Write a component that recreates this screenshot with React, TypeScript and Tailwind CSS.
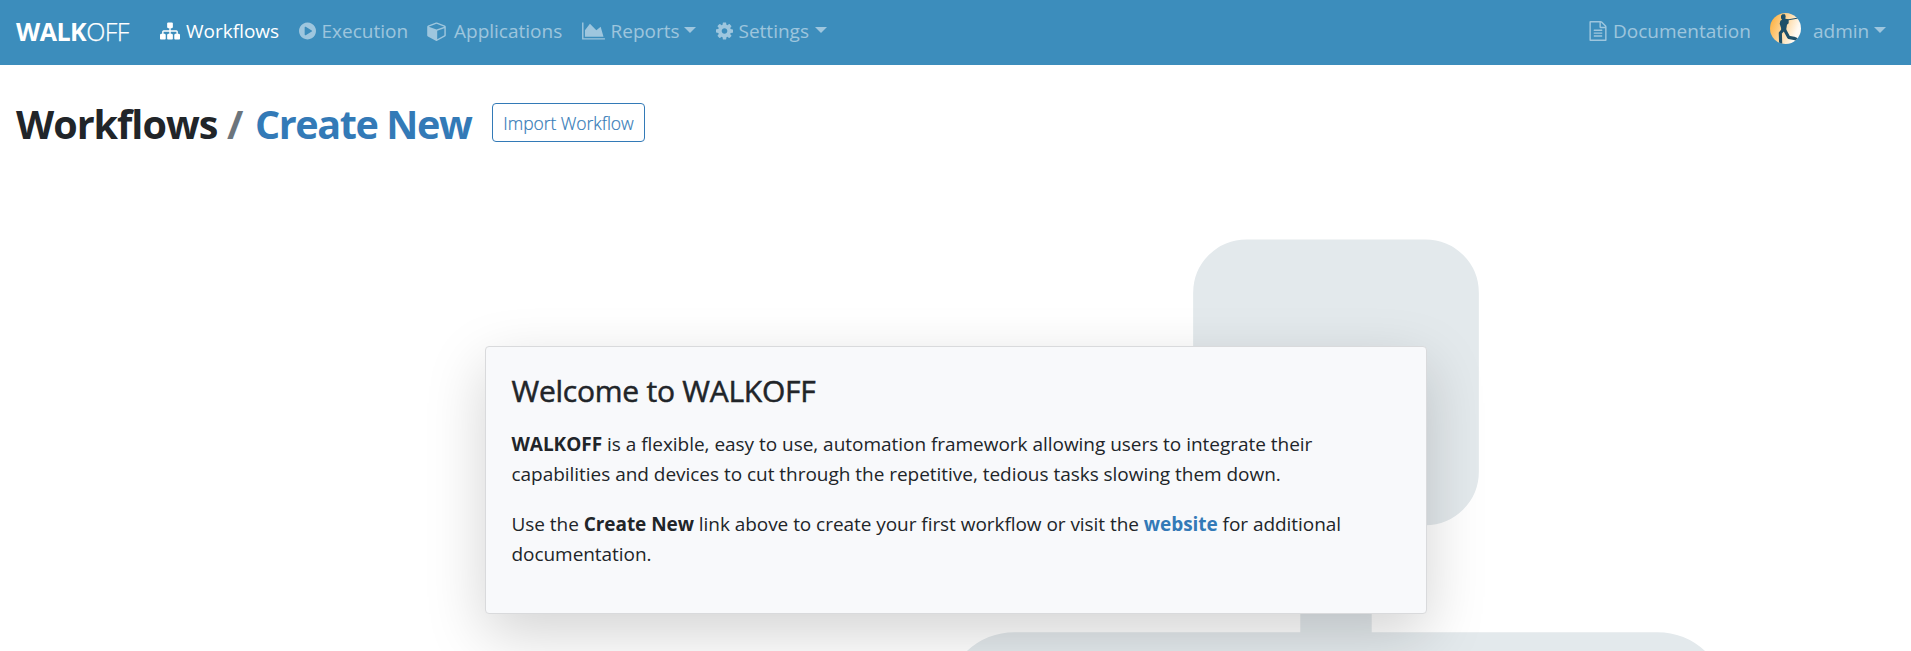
import type { ReactNode } from "react";

const paths = {
  sitemap:
    "M1792 1248v320q0 40-28 68t-68 28h-320q-40 0-68-28t-28-68v-320q0-40 28-68t68-28h96v-192h-512v192h96q40 0 68 28t28 68v320q0 40-28 68t-68 28h-320q-40 0-68-28t-28-68v-320q0-40 28-68t68-28h96v-192h-512v192h96q40 0 68 28t28 68v320q0 40-28 68t-68 28h-320q-40 0-68-28t-28-68v-320q0-40 28-68t68-28h96v-192q0-52 38-90t90-38h512v-192h-96q-40 0-68-28t-28-68v-320q0-40 28-68t68-28h320q40 0 68 28t28 68v320q0 40-28 68t-68 28h-96v192h512q52 0 90 38t38 90v192h96q40 0 68 28t28 68z",
  play: "M896 128q209 0 385.500 103t279.500 279.500 103 385.500-103 385.500-279.500 279.500-385.500 103-385.500-103-279.500-279.500-103-385.500 103-385.500 279.500-279.500 385.500-103zm384 823q32-18 32-55t-32-55l-544-320q-31-19-64-1-32 19-32 56v640q0 37 32 56 16 8 32 8 17 0 32-9z",
  cube: "M896 1629l640-349v-636l-640 233v752zm-64-865l698-254-698-254-698 254zm832-252v768q0 35-18 65t-49 47l-704 384q-28 16-61 16t-61-16l-704-384q-31-17-49-47t-18-65v-768q0-40 23-73t61-47l704-256q22-8 44-8t44 8l704 256q38 14 61 47t23 73z",
  chart: "M2048 1536v128h-2048v-1536h128v1408h1920zm-384-1024l256 896h-1664v-576l448-576 576 576z",
  cog: "M1152 896q0-106-75-181t-181-75-181 75-75 181 75 181 181 75 181-75 75-181zm512-109v222q0 12-8 23t-20 13l-185 28q-19 54-39 91 35 50 107 138 10 12 10 25t-9 23q-27 37-99 108t-94 71q-12 0-26-9l-138-108q-44 23-91 38-16 136-29 186-7 28-36 28h-222q-14 0-24.500-8.500t-11.500-21.500l-28-184q-49-16-90-37l-141 107q-10 9-25 9-14 0-25-11-126-114-165-168-7-10-7-23 0-12 8-23 15-21 51-66.500t54-70.500q-27-50-41-99l-183-27q-13-2-21-12.500t-8-23.500v-222q0-12 8-23t19-13l186-28q14-46 39-92-40-57-107-138-10-12-10-24 0-10 9-23 26-36 98.500-107.500t94.500-71.500q13 0 26 10l138 107q44-23 91-38 16-136 29-186 7-28 36-28h222q14 0 24.500 8.500t11.500 21.500l28 184q49 16 90 37l142-107q9-9 24-9 13 0 25 10 129 119 165 170 7 8 7 22 0 12-8 23-15 21-51 66.500t-54 70.500q26 50 41 98l183 28q13 2 21 12.500t8 23.500z",
  file: "M1596 380q28 28 48 76t20 88v1152q0 40-28 68t-68 28h-1344q-40 0-68-28t-28-68v-1600q0-40 28-68t68-28h896q40 0 88 20t76 48zm-444-244v376h376q-10-29-22-41l-313-313q-12-12-41-22zm384 1528v-1024h-416q-40 0-68-28t-28-68v-416h-768v1536h1280zm-1024-864q0-14 9-23t23-9h704q14 0 23 9t9 23v64q0 14-9 23t-23 9h-704q-14 0-23-9t-9-23v-64zm736 224q14 0 23 9t9 23v64q0 14-9 23t-23 9h-704q-14 0-23-9t-9-23v-64q0-14 9-23t23-9h704zm0 256q14 0 23 9t9 23v64q0 14-9 23t-23 9h-704q-14 0-23-9t-9-23v-64q0-14 9-23t23-9h704z",
};

function Icon({ d, viewBox, className }: { d: string; viewBox: string; className: string }) {
  return (
    <svg viewBox={viewBox} className={`mt-[-3px] shrink-0 fill-current ${className}`} aria-hidden="true">
      <path d={d} />
    </svg>
  );
}

function Caret() {
  return (
    <svg viewBox="0 0 12 6" className="mt-[-5px] h-1.5 w-3 shrink-0 fill-current" aria-hidden="true">
      <path d="M0 0h12L6 6z" />
    </svg>
  );
}

function NavLink({
  icon,
  label,
  width,
  active = false,
  caret = false,
}: {
  icon?: ReactNode;
  label: string;
  width: string;
  active?: boolean;
  caret?: boolean;
}) {
  return (
    <a href="#" className={`flex h-full shrink-0 items-center ${width} ${active ? "text-white" : "text-white/50"}`}>
      {icon}
      <span className="grow pb-0.5 whitespace-nowrap">{label}</span>
      {caret && <Caret />}
    </a>
  );
}

function Avatar() {
  return (
    <svg viewBox="0 0 93 93" className="mt-[-8px] mr-[12px] size-[31px] shrink-0" aria-hidden="true">
      <defs>
        <linearGradient id="sun" x1="0" y1="0.300" x2="1" y2="0.700">
          <stop offset="0.050" stopColor="#fdb64c" />
          <stop offset="0.850" stopColor="#fffaf3" />
        </linearGradient>
        <clipPath id="disc">
          <circle cx="46.500" cy="46.500" r="46.500" />
        </clipPath>
      </defs>
      <g clipPath="url(#disc)">
        <rect width="93" height="93" fill="url(#sun)" />
        <g fill="#1f5068">
          <path d="M33 8l4-4h8l2 6-1 7 10 2v12l-5 4-2 12-1 6H34l-1-9-4-12 2-9 5-3-3-4z" />
        </g>
        <g fill="none" stroke="#1f5068" strokeLinejoin="round">
          <path strokeWidth="3" d="M52 21l33-6" />
          <path strokeWidth="9.500" d="M40 50L31 60l1 33" />
          <path strokeWidth="9.500" d="M43 49l13 24 16 3 10 4" />
        </g>
      </g>
    </svg>
  );
}

export default function App() {
  return (
    <div className="relative isolate h-[651px] overflow-hidden bg-white font-['Open_Sans','Noto_Sans',sans-serif] text-[#212529]">
      <svg
        viewBox="0 0 1792 1792"
        className="absolute top-[167.500px] left-[836px] -z-10 size-[1000px] fill-[#e3e9ec]"
        aria-hidden="true"
      >
        <path d={paths.sitemap} />
      </svg>

      <nav className="flex h-[65px] items-center bg-[#3c8dbc] pl-4 text-[19px]">
        <a href="#" className="w-36 shrink-0 pb-0.5 text-[25px] tracking-[-0.5px] text-white">
          <span className="font-bold">WALK</span>
          <span className="font-light [-webkit-text-stroke:0.250px_white]">OFF</span>
        </a>
        <NavLink
          active
          label="Workflows"
          width="w-[138.500px]"
          icon={<Icon d={paths.sitemap} viewBox="0 0 1792 1792" className="mr-[6px] size-5" />}
        />
        <NavLink
          label="Execution"
          width="w-[128.500px]"
          icon={<Icon d={paths.play} viewBox="128 0 1536 1792" className="mr-[6px] h-5 w-[17px]" />}
        />
        <NavLink
          label="Applications"
          width="w-[154.500px]"
          icon={<Icon d={paths.cube} viewBox="0 0 1664 1792" className="mr-[8px] h-5 w-[19px]" />}
        />
        <NavLink
          caret
          label="Reports"
          width="w-[114.500px]"
          icon={<Icon d={paths.chart} viewBox="0 0 2048 1792" className="mr-[6px] h-5 w-[23px]" />}
        />
        <div className="w-[19.500px] shrink-0" />
        <NavLink
          caret
          label="Settings"
          width="w-[111.500px]"
          icon={<Icon d={paths.cog} viewBox="128 0 1536 1792" className="mr-[6px] h-5 w-[17px]" />}
        />
        <div className="ml-auto flex h-full shrink-0 items-center pr-[25px]">
          <NavLink
            label="Documentation"
            width="w-[181px]"
            icon={<Icon d={paths.file} viewBox="128 0 1536 1792" className="mr-[6px] h-5 w-[18px]" />}
          />
          <Avatar />
          <NavLink caret label="admin" width="w-[73px]" />
        </div>
      </nav>

      <header className="flex h-[120px] items-start pt-[38px] pl-4">
        <h1 className="flex h-[42px] items-center text-[39.500px] leading-[42px] font-bold whitespace-nowrap">
          <span className="w-[211px] tracking-[-1px]">Workflows</span>
          <span className="w-[28px] text-[#6c757d]">/</span>
          <a href="#" className="w-[237px] tracking-[-1.400px] text-[#337ab7]">
            Create New
          </a>
        </h1>
        <button className="flex h-[39px] w-[153px] items-center justify-center rounded-[4px] border border-[#337ab7] bg-white pt-px text-[17.500px] font-light tracking-[-0.050px] whitespace-nowrap text-[#337ab7] [-webkit-text-stroke:0.200px_#337ab7]">
          Import Workflow
        </button>
      </header>

      <main className="flex justify-center pt-[161px]">
        <section className="h-[268px] w-[942px] rounded-[4px] border border-[#d9dadc] bg-[#f8f9fb] px-[26px] pt-[25px] shadow-[0_20px_60px_rgba(0,0,0,0.175)]">
          <h2 className="mb-5 text-[30px] leading-[37px] tracking-[-0.250px] [-webkit-text-stroke:0.500px_#212529]">
            Welcome to WALKOFF
          </h2>
          <p className="mb-5 text-[19px] leading-[30px] tracking-[-0.030px] whitespace-nowrap">
            <strong>WALKOFF</strong> is a flexible, easy to use, automation framework allowing users to integrate their
            <br />
            capabilities and devices to cut through the repetitive, tedious tasks slowing them down.
          </p>
          <p className="text-[19px] leading-[30px] tracking-[-0.050px] whitespace-nowrap">
            Use the <strong>Create New</strong> link above to create your first workflow or visit the{" "}
            <a href="#" className="font-bold text-[#337ab7]">
              website
            </a>{" "}
            for additional
            <br />
            documentation.
          </p>
        </section>
      </main>
    </div>
  );
}
